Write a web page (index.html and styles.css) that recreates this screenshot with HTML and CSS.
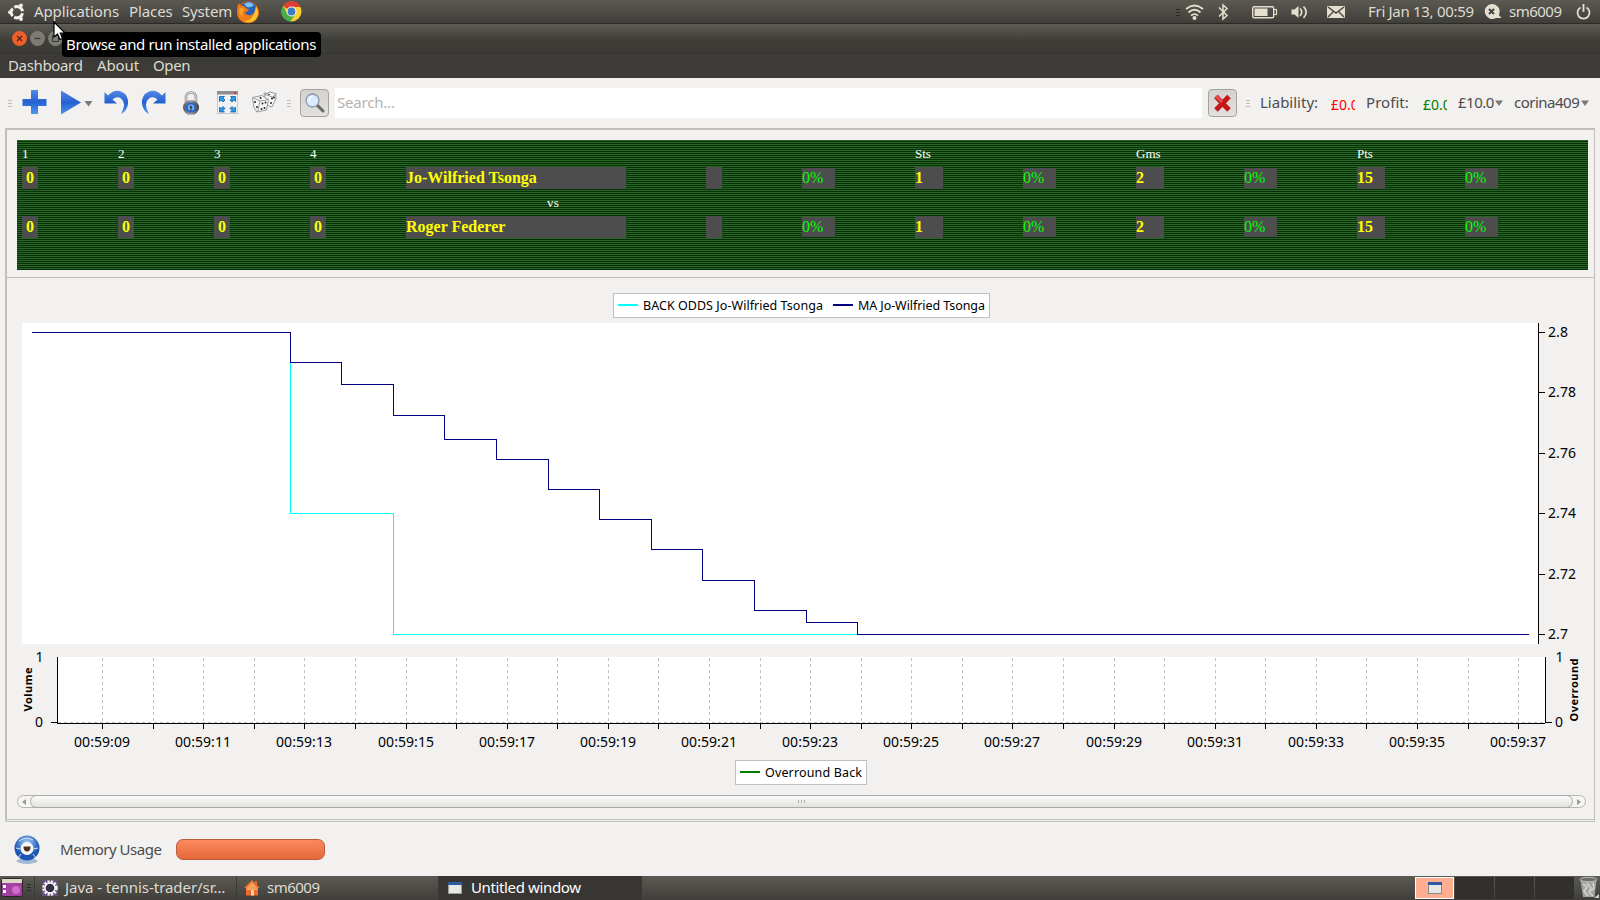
FILE: index.html
```html
<!DOCTYPE html>
<html lang="en">
<head>
<meta charset="utf-8">
<title>Untitled window</title>
<link rel="stylesheet" href="styles.css">
</head>
<body>
<header class="top-panel">
  <svg class="ubuntu" width="20" height="20" viewBox="0 0 20 20"><g fill="none" stroke="#f2f0ea" stroke-width="3"><path d="M7.2 5.2A5.6 5.6 0 0 1 15.500 9.300M15.500 11.200A5.600 5.600 0 0 1 7.200 15.100M5.700 14A5.600 5.600 0 0 1 5.700 6.400"/></g><g fill="#f2f0ea"><circle cx="3" cy="10.200" r="1.900"/><circle cx="14" cy="3.300" r="1.900"/><circle cx="14" cy="17" r="1.900"/></g></svg>
  <span class="t apps">Applications</span><span class="t places">Places</span><span class="t system">System</span>
  <svg class="firefox" width="24" height="24" viewBox="0 0 24 24"><circle cx="12" cy="12" r="11" fill="#d9520f"/><circle cx="12.500" cy="9.500" r="8" fill="#2a62b5"/><path d="M8 4Q14 0 18 5Q15 8 11 7Z" fill="#7dc0ee"/><path d="M1.500 6L3 3.500 5 6Q8 5 10 8L13 10Q11 12 9 12Q10 16 15 15Q20 13 20 7Q24 11 22 17Q18 24 11 23Q2 22 1 13Z" fill="#ee7a18"/><path d="M20 6Q25 14 19 20Q13 24 8 21Q18 21 20 6Z" fill="#fdc331"/><path d="M3 9Q6 7 8 9Q5 14 8 18Q3 15 3 9Z" fill="#f9a32a"/></svg>
  <svg class="chrome" width="21" height="21" viewBox="0 0 21 21"><circle cx="10.500" cy="10.500" r="10" fill="#f8cf35"/><path d="M10.500 10.500L2 5A10 10 0 0 1 19.500 6H10.500Z" fill="#df3e32"/><path d="M2 5A10 10 0 0 0 9.500 20.500L14.500 12.700 6.500 12.700Z" fill="#4aae48"/><circle cx="10.500" cy="10.500" r="5" fill="#f4f4f4"/><circle cx="10.500" cy="10.500" r="3.900" fill="#3b7cc4"/></svg>
  <svg class="indicators" width="180" height="24" viewBox="1174 0 180 24"><g stroke="#2b2a27"><path d="M1176 9.500h4M1176 12.500h4M1176 15.500h4"/></g><g fill="none" stroke="#e4dfcf" stroke-width="1.700"><path d="M1186 9Q1194.500 2 1203 9M1188.500 12.500Q1194.500 7 1200.500 12.500M1191 15.700Q1194.500 12.500 1198 15.700"/><path d="M1219 7.500L1227 15.500 1223 19V5L1227 8.500 1219 16.500" stroke-width="1.500"/><rect x="1252.700" y="6.700" width="21" height="11" rx="1.500" stroke-width="1.400"/><path d="M1274 9.500h2.500v5h-2.500" stroke-width="1.200"/><path d="M1300 8.500Q1303.500 12 1300 16M1303.500 6.500Q1309 12 1303.500 18"/></g><g fill="#e4dfcf"><circle cx="1194.500" cy="18" r="2"/><path d="M1254.500 8.500h13v7.500h-13zM1291.500 9.500h3l4-3.500v12l-4-3.500h-3z"/><rect x="1327" y="6" width="18" height="12" rx="1"/></g><path d="M1328 7L1336 13 1344 7M1328 17L1333 12M1344 17L1339 12" fill="none" stroke="#45443f" stroke-width="1.400"/></svg>
  <span class="t clock">Fri Jan 13, 00:59</span>
  <svg class="presence" width="18" height="16" viewBox="0 0 18 16"><path d="M8 0A7.500 7.500 0 1 0 12 14H17.500L14.800 11A7.500 7.500 0 0 0 8 0Z" fill="#e4dfcf"/><path d="M5 5L10 10M10 5L5 10" stroke="#45443f" stroke-width="2"/></svg>
  <span class="t user">sm6009</span>
  <svg class="power" width="15" height="16" viewBox="0 0 15 16"><path d="M4.500 3.500A6 6 0 1 0 10.500 3.500M7.500 0V8" fill="none" stroke="#e4dfcf" stroke-width="1.800"/></svg>
</header>

<div class="title-bar">
  <i class="win-btn close"><svg width="15" height="15"><path d="M5 5l5 5M10 5l-5 5" stroke="#4b2414" stroke-width="1.200"/></svg></i>
  <i class="win-btn"><svg width="15" height="15"><path d="M4.500 7.500h6" stroke="#393833" stroke-width="1.200"/></svg></i>
  <i class="win-btn"><svg width="15" height="15"><path d="M4.500 4.500h6v6h-6z" fill="none" stroke="#393833"/></svg></i>
</div>
<nav class="menu-bar"><span class="t m1">Dashboard</span><span class="t m2">About</span><span class="t m3">Open</span></nav>

<div class="toolbar">
  <svg class="tools" width="292" height="44" viewBox="0 80 292 44">
    <defs><linearGradient id="blue" x1="0" y1="0" x2="0" y2="1"><stop offset="0" stop-color="#5388e4"/><stop offset=".5" stop-color="#2561d0"/><stop offset="1" stop-color="#4b97ee"/></linearGradient><linearGradient id="steel" x1="0" x2="1"><stop offset="0" stop-color="#555"/><stop offset=".5" stop-color="#aaa"/><stop offset="1" stop-color="#333"/></linearGradient></defs>
    <path d="M8 100.500h4M8 103.500h4M8 106.500h4M287 100.500h4M287 103.500h4M287 106.500h4" stroke="#bebdb9"/>
    <path d="M31 90h7v9h8.500v7h-8.500v8h-7v-8h-8.500v-7h8.500z" fill="url(#blue)"/>
    <path d="M61 90.500L81 102.500 61 114.500Z" fill="url(#blue)"/>
    <path d="M84.500 101h8l-4 5.500z" fill="#7a7974"/>
    <path d="M104.500 92L108 95.500Q114 89 121 91.500Q129 95 128 104Q127 111 121 114Q127 103 121 98.500Q117 95.500 112.500 99.500L117 103.500H104.500Z" fill="url(#blue)"/>
    <path d="M165.500 92L162 95.500Q156 89 149 91.500Q141 95 142 104Q143 111 149 114Q143 103 149 98.500Q153 95.500 157.500 99.500L153 103.500H165.500Z" fill="url(#blue)"/>
    <path d="M186 102V97.500A5 5 0 0 1 196 97.500V102" fill="none" stroke="#8b8b8b" stroke-width="2.600"/><path d="M186 102V97.500A5 5 0 0 1 196 97.500V102" fill="none" stroke="#eee"/>
    <ellipse cx="191" cy="107.500" rx="8" ry="7.500" fill="url(#steel)"/><circle cx="191" cy="107.500" r="5.300" fill="#2563c8"/><circle cx="191" cy="107.500" r="3.300" fill="#70acf2"/><circle cx="191" cy="107" r="1.300" fill="#444"/><path d="M190.400 107h1.200v4h-1.200z" fill="#444"/>
    <rect x="217.500" y="91.500" width="20" height="22" fill="#f2f2f2" stroke="#c7c7c7"/><path d="M217 91h21v3.500h-21z" fill="#8f8f91"/><path d="M234 92h2v2h-2z" fill="#e03c1c"/>
    <g fill="#299bea" stroke="#175fa8" stroke-width=".8"><path d="M219.500 96.500h5l-1.500 1.500 2 2-2 2-2-2-1.500 1.500z"/><path d="M235.500 96.500h-5l1.500 1.500-2 2 2 2 2-2 1.500 1.500z"/><path d="M219.500 112h5l-1.500-1.500 2-2-2-2-2 2-1.500-1.500z"/><path d="M235.500 112h-5l1.500-1.500-2-2 2-2 2 2 1.500-1.500z"/></g>
    <g fill="#f6f6f6" stroke="#8d9092" stroke-width=".9"><path d="M264 93L275.500 94.500 276 98 272 107 266 105Z"/><path d="M265 94.500l5-2.500 6.500 2-4 3z"/><path d="M252.500 97.500L262 95.500 268.500 99.500 266.500 110 257 112 254 107.500Z"/><path d="M252.500 97.500L260 101 268.500 99.500M260 101L257.500 112"/></g>
    <g fill="#26282a"><circle cx="255" cy="102" r="1"/><circle cx="257" cy="107" r="1"/><circle cx="262.500" cy="103.500" r="1"/><circle cx="265.500" cy="102.500" r="1"/><circle cx="261.500" cy="109" r="1"/><circle cx="264.500" cy="108" r="1"/><circle cx="260.500" cy="98" r="1"/><circle cx="272" cy="98.500" r="1"/><circle cx="274" cy="97.500" r="1"/><circle cx="271" cy="103" r="1"/><circle cx="269" cy="94.500" r=".8"/></g>
  </svg>
  <button class="sq find"><svg width="27" height="26"><path d="M16 15l6 6" stroke="#666" stroke-width="3" stroke-linecap="round"/><circle cx="11.500" cy="10.500" r="6.500" fill="#d9eafd" stroke="#8d97a5" stroke-width="1.300"/><path d="M7.500 10Q8 6 12 6Q9 8 8.500 12Z" fill="#fff"/></svg></button>
  <div class="search"><span class="t">Search...</span></div>
  <button class="sq clear"><svg width="27" height="26"><path d="M7 6.500L20 20M20 6.500L7 20" stroke="#c51718" stroke-width="5"/><path d="M7 6L13 12" stroke="#e2504d" stroke-width="3"/></svg></button>
  <svg class="grip" width="4" height="8"><path d="M0 1.500h4M0 4.500h4M0 7.500h4" stroke="#bebdb9"/></svg>
  <span class="t lb">Liability:</span><span class="t amt red">£0.00</span>
  <span class="t pf">Profit:</span><span class="t amt green">£0.00</span>
  <span class="t stake">£10.0</span><svg class="drop" width="8" height="6"><path d="M0 .5h8L4 6z" fill="#7a7974"/></svg>
  <span class="t acct">corina409</span><svg class="drop" width="8" height="6"><path d="M0 .5h8L4 6z" fill="#7a7974"/></svg>
</div>

<main class="frame">
  <section class="score">
    <div class="row head"><span>1</span><span>2</span><span>3</span><span>4</span><span></span><span></span><span></span><span>Sts</span><span></span><span>Gms</span><span></span><span>Pts</span><span></span></div>
    <div class="row vals"><b class="d">0</b><b class="d">0</b><b class="d">0</b><b class="d">0</b><b class="name">Jo-Wilfried Tsonga</b><b class="d"></b><span class="pc">0%</span><b class="n">1</b><span class="pc">0%</span><b class="n">2</b><span class="pc">0%</span><b class="n">15</b><span class="pc">0%</span></div>
    <div class="vs">vs</div>
    <div class="row vals"><b class="d">0</b><b class="d">0</b><b class="d">0</b><b class="d">0</b><b class="name">Roger Federer</b><b class="d"></b><span class="pc">0%</span><b class="n">1</b><span class="pc">0%</span><b class="n">2</b><span class="pc">0%</span><b class="n">15</b><span class="pc">0%</span></div>
  </section>
  <section class="charts">
    <svg id="chart" width="1587" height="510" viewBox="7 278 1587 510">
      <rect x="613.500" y="293.500" width="376" height="24" fill="#fff" stroke="#c0c0c0"/>
      <path d="M618 305h20" stroke="#0ff" stroke-width="2"/><path d="M833 305h20" stroke="#000080" stroke-width="2"/>
      <text class="lg" x="643" y="310" textLength="180">BACK ODDS Jo-Wilfried Tsonga</text>
      <text class="lg" x="858" y="310" textLength="127">MA Jo-Wilfried Tsonga</text>
      <rect x="22" y="323" width="1516" height="321" fill="#fff"/>
      <path d="M1538.500 323v321" stroke="#000"/>
      <g fill="none" shape-rendering="crispEdges">
        <path d="M290.500 362.500V513.500H393.500V634.500H858" stroke="#00ffff"/>
        <path d="M32 332.500H290.500V362.500H341.500V384.500H393.500V415.500H444.500V439.500H496.500V459.500H548.500V489.500H599.500V519.500H651.500V549.500H702.500V580.500H754.500V610.500H806.500V622.500H857.500V634.500H1529" stroke="#000080"/>
      </g>
      <rect x="58" y="657" width="1487" height="66" fill="#fff"/>
      <g id="ticks"></g>
      <path d="M57.500 657v66M51 722.500h6M57 723.500h1488M1545.500 657v66M1546 722.500h6" stroke="#000"/>
      <path d="M58 722.500h1487" stroke="#c0c0c0" stroke-dasharray="3 3"/>
      <text x="35.500" y="662">1</text><text x="35" y="727">0</text>
      <text x="1555.500" y="662">1</text><text x="1555" y="727">0</text>
      <text class="ax" transform="translate(32 711.500) rotate(-90)" textLength="44">Volume</text>
      <text class="ax" transform="translate(1578 721.500) rotate(-90)" textLength="63">Overround</text>
      <rect x="735.500" y="760.500" width="131" height="24" fill="#fff" stroke="#c0c0c0"/>
      <path d="M740 772h20" stroke="#008000" stroke-width="2"/>
      <text class="lg" x="765" y="777" textLength="97">Overround Back</text>
    </svg>
    <div class="scroll"><i class="arrow"><svg width="12" height="12"><path d="M8 3v6L4 6z" fill="#999"/></svg></i><div class="thumb"><i></i><i></i><i></i></div><i class="arrow"><svg width="12" height="12"><path d="M4 3v6l4-3z" fill="#999"/></svg></i></div>
  </section>
</main>

<footer class="status">
  <svg class="orb" width="28" height="30" viewBox="0 0 28 30"><defs><radialGradient id="ob" cy=".3"><stop offset="0" stop-color="#a9d2f8"/><stop offset="1" stop-color="#1c55b4"/></radialGradient></defs><ellipse cx="14" cy="26" rx="10.500" ry="3" fill="#a8b9d5"/><circle cx="14" cy="13" r="12.500" fill="url(#ob)"/><path d="M6 6Q13 1 20 5M3 13l4 1M25 13l-4 1M8 19l-3 4M20 19l3 4" stroke="#d4e9ff" fill="none"/><circle cx="14" cy="13.500" r="6.500" fill="#f7f7f7"/><path d="M10.500 11.500h7q0 5-3.500 5t-3.500-5z" fill="#4b311a"/></svg>
  <span class="t mem">Memory Usage</span><div class="bar"></div>
</footer>

<div class="task-bar">
  <svg class="desk" width="24" height="24"><rect x="1.500" y="2.500" width="21" height="18" rx="2" fill="#a33fa5" stroke="#2d2429"/><path d="M2 3h20v4H2z" fill="#dcd9c5"/><path d="M3 9h3v3H3zM3 14h3v3H3z" fill="#fff"/><circle cx="16" cy="14" r="4" fill="#cf6cc6"/></svg>
  <svg class="tgrip" width="4" height="10"><path d="M0 1.500h4M0 4.500h4M0 7.500h4" stroke="#2b2a27"/></svg>
  <div class="task"><svg width="16" height="16"><rect width="16" height="16" fill="#665080"/><circle cx="8" cy="8" r="6.300" fill="none" stroke="#eee" stroke-width="3" stroke-dasharray="2.200 1.100"/><circle cx="8" cy="8" r="5" fill="#34304a" stroke="#fff" stroke-width="1.300"/></svg><span class="t java">Java - tennis-trader/sr…</span></div>
  <div class="task home"><svg width="16" height="16"><path d="M8 0L16 8H14V15.500H2V8H0Z" fill="#ee6b2b"/><path d="M8 2L2.500 8V10H13.500V8Z" fill="#f7a05e"/><path d="M7 10h3v5.500H7z" fill="#fbd2a2"/><path d="M11 1h2v4h-2z" fill="#ee6b2b"/></svg><span class="t hm">sm6009</span></div>
  <div class="task active"><svg width="14" height="12"><path d="M0 0h14v12H0z" fill="#9a9a96"/><path d="M1 3h12v8H1z" fill="#e7e8e3"/><path d="M0 0h14v3H0z" fill="#2c5ba2"/></svg><span class="t un">Untitled window</span></div>
  <div class="spaces"><i class="cur"><svg width="14" height="12"><path d="M0 0h14v12H0z" fill="#888"/><path d="M1 3h12v8H1z" fill="#e7e8e3"/><path d="M0 0h14v3H0z" fill="#2c5ba2"/></svg></i><i></i><i></i><i></i></div>
  <svg class="trash" width="22" height="24"><path d="M2.500 4h16l-2 17H5z" fill="#a3a3a0"/><path d="M5 8l4 3-3 4 4 5M9 7l4 5-2 4 4 4M15 7l1 5-3 3" stroke="#d4d4d1" stroke-width="1.500" fill="none"/><ellipse cx="10.500" cy="3.500" rx="8.500" ry="2.200" fill="#6d6d6a" stroke="#bbb"/><path d="M16 22l5-4v4z" fill="#ccc"/></svg>
</div>

<div class="tip"><span class="t">Browse and run installed applications</span></div>
<svg class="cursor" width="14" height="20"><path d="M1 1V16L4.500 13 7 18.500 9.500 17.500 7.300 12H12Z" fill="#fff" stroke="#000" stroke-width="1.200"/></svg>
<script src="chart.js"></script>
</body>
</html>
```
FILE: styles.css
```css
* { box-sizing: border-box; }
body { margin: 0; width: 1600px; height: 900px; overflow: hidden; position: relative; display: flex; flex-direction: column; background: #f2f1f0; font: 15px "Noto Sans", sans-serif; color: #4c4c4c; }
.t { white-space: nowrap; flex: none; line-height: 20px; margin-bottom: 2px; }
svg { display: block; flex: none; }
i { font-style: normal; }
.top-panel { height: 24px; flex: none; display: flex; align-items: center; background: linear-gradient(#5b5a52, #3f3e3a); border-bottom: 1px solid #2b2a27; color: #dfdbd2; }
.ubuntu { margin-left: 7px; }
.apps { width: 95px; margin-left: 7px; letter-spacing: -.1px; }
.places { width: 53px; letter-spacing: -.1px; }
.system { width: 54px; letter-spacing: -.15px; }
.firefox { margin-left: 0; }
.chrome { margin-left: 21px; }
.indicators { margin-left: 872px; }
.clock { width: 114px; margin-left: 14px; letter-spacing: -.2px; }
.clock { letter-spacing: -.3px; }
.presence { margin-left: 2px; }
.user { width: 54px; margin-left: 7px; letter-spacing: -.6px; letter-spacing: -.5px; }
.power { margin-left: 13px; }
.title-bar { height: 28px; flex: none; display: flex; gap: 3px; padding: 7px 0 0 12px; background: linear-gradient(#5e5d56, #3d3c37 60%); }
.win-btn { width: 15px; height: 15px; border-radius: 50%; background: #7c7b74; }
.win-btn.close { background: #ec5f2b; }
.menu-bar { height: 26px; flex: none; display: flex; align-items: center; padding: 0 0 0 8px; background: #3c3b37; border-top: 1px solid #363531; color: #dfdbd2; }
.m1 { width: 89px; letter-spacing: -.35px; }
.m2 { width: 56px; letter-spacing: -.1px; }
.m3 { letter-spacing: -.4px; }
.toolbar { height: 50px; flex: none; display: flex; align-items: center; }
.tools { align-self: flex-start; margin-top: 2px; }
.sq { width: 29px; height: 28px; padding: 0; border: 1px solid #a3a29e; border-radius: 4px; background: linear-gradient(#d3d2d0, #e2e1df); }
.find { margin-left: 8px; }
.search { width: 867px; height: 30px; margin-left: 6px; padding: 4px 2px; background: #fff; color: #b5b3b0; display: flex; }
.search .t { letter-spacing: -.2px; }
.clear { margin-left: 6px; }
.grip { margin-left: 9px; }
.lb { width: 57px; margin-left: 10px; }
.amt { width: 24px; height: 14px; overflow: hidden; font-size: 14px; margin: 1px 0 0 14px; line-height: 16px; }
.red { color: #f00; }
.green { color: #008000; }
.pf { width: 43px; margin-left: 11px; letter-spacing: .05px; }
.stake { width: 36px; margin-left: 11px; letter-spacing: -.5px; }
.acct { width: 66px; margin-left: 11px; letter-spacing: -.5px; }
.drop { margin-left: 1px; }
.frame { width: 1590px; height: 694px; flex: none; margin-left: 5px; border: 2px solid #c0bfb8; border-right-width: 1px; border-bottom: 3px double #bfbfbd; }
.score { height: 148px; border-bottom: 1px solid #c0bfbd; background: repeating-linear-gradient(#2a6427 0 1px, #043104 1px 2px) 10px 10px / 1571px 130px no-repeat; color: #fff; font-family: "Liberation Serif", serif; }
.row { display: grid; grid-template-columns: 96px 96px 96px 96px 300px 96px 113px 108px 113px 108px 113px 108px 113px; margin-left: 15px; align-items: center; }
.head { height: 37px; padding-top: 10px; font-size: 13px; line-height: 27px; }
.vals { height: 22px; font-size: 16px; line-height: 22px; color: #ff0; }
.vals b { background: #4d4d4d; height: 22px; }
.d { width: 16px; text-align: center; }
.name { width: 220px; }
.n { width: 28px; }
.pc { width: 33px; height: 20px; line-height: 20px; color: #0f0; background: #4d4d4d; }
.vs { height: 27px; line-height: 28px; padding-left: 540px; font-size: 13px; letter-spacing: .3px; }
.charts { height: 541px; }
#chart text { font: 14px "Noto Sans", sans-serif; fill: #000; }
#chart .lg { font-size: 12.5px; }
#chart .ax { font-size: 11px; font-weight: bold; }
.scroll { display: flex; width: 1569px; height: 13px; margin: 7px 0 0 10px; border: 1px solid #b5b4b1; border-radius: 7px; background: #f6f5f4; }
.arrow { width: 12px; }
.thumb { display: flex; flex: 1; gap: 2px; justify-content: center; align-items: center; margin: -1px 0; padding-right: 1px; height: 13px; border: 1px solid #aaa9a5; border-radius: 7px; background: linear-gradient(#fbfbfb, #e3e2e0); }
.thumb i { width: 1px; height: 3px; background: #aaa; }
.status { height: 54px; flex: none; display: flex; align-items: center; }
.orb { margin: 2px 0 0 13px; }
.mem { width: 102px; margin-left: 19px; margin-bottom: 1px; letter-spacing: -.47px; }
.bar { width: 149px; height: 21px; margin: 0 0 0 14px; border: 1px solid #bd5c3a; border-radius: 7px; background: linear-gradient(#fb8a5e, #e5693a); }
.task-bar { height: 24px; flex: none; display: flex; align-items: center; background: linear-gradient(#5b5a52, #3f3e3a); color: #dfdbd2; }
.tgrip { margin-left: 3px; }
.task { display: flex; align-items: center; width: 202px; height: 24px; gap: 7px; margin-left: 3px; padding-left: 7px; border-left: 1px solid #3b3a36; }
.java { letter-spacing: -.05px; }
.hm { letter-spacing: -.5px; }
.home { margin-left: 0; }
.active { margin-left: 0; padding-left: 9px; gap: 9px; background: #373632; width: 204px; color: #fff; }
.un { letter-spacing: -.37px; }
.spaces { display: flex; gap: 1px; margin-left: 773px; }
.spaces i { display: flex; align-items: center; justify-content: center; width: 39px; height: 22px; background: #31302e; }
.spaces .cur { background: #ffae91; border: 1px solid #fff; }
.trash { margin-left: 4px; }
.tip { position: absolute; left: 62px; top: 32px; width: 259px; height: 25px; padding: 2px 4px; border-radius: 4px; background: #000; color: #fff; letter-spacing: -.37px; }
.cursor { position: absolute; left: 53px; top: 21px; }
```
FILE: chart.js
```javascript
const ns = 'http://www.w3.org/2000/svg';
const ticks = document.getElementById('ticks');

function add(name, attrs, text) {
  const el = document.createElementNS(ns, name);
  for (const key in attrs) el.setAttribute(key, attrs[key]);
  if (text) el.textContent = text;
  ticks.appendChild(el);
}

// Time axis: one grid line per second, a label every second one.
for (let i = 0; i <= 28; i++) {
  const x = Math.round(102.2 + i * 50.57) + 0.5;
  add('path', { d: `M${x} 658V722`, stroke: '#c0c0c0', 'stroke-dasharray': '3 3' });
  add('path', { d: `M${x} 724V729`, stroke: '#000' });
  if (i % 2 === 0) {
    add('text', { x: x - 28.5, y: 747, textLength: 56 }, '00:59:' + String(9 + i).padStart(2, '0'));
  }
}

// Odds axis.
[['2.8', 332], ['2.78', 392], ['2.76', 453], ['2.74', 513], ['2.72', 574], ['2.7', 634]].forEach(([label, y]) => {
  add('path', { d: `M1539 ${y + 0.5}h6`, stroke: '#000' });
  add('text', { x: 1548, y: y + 5, textLength: label.length === 3 ? 20 : 28 }, label);
});
```
